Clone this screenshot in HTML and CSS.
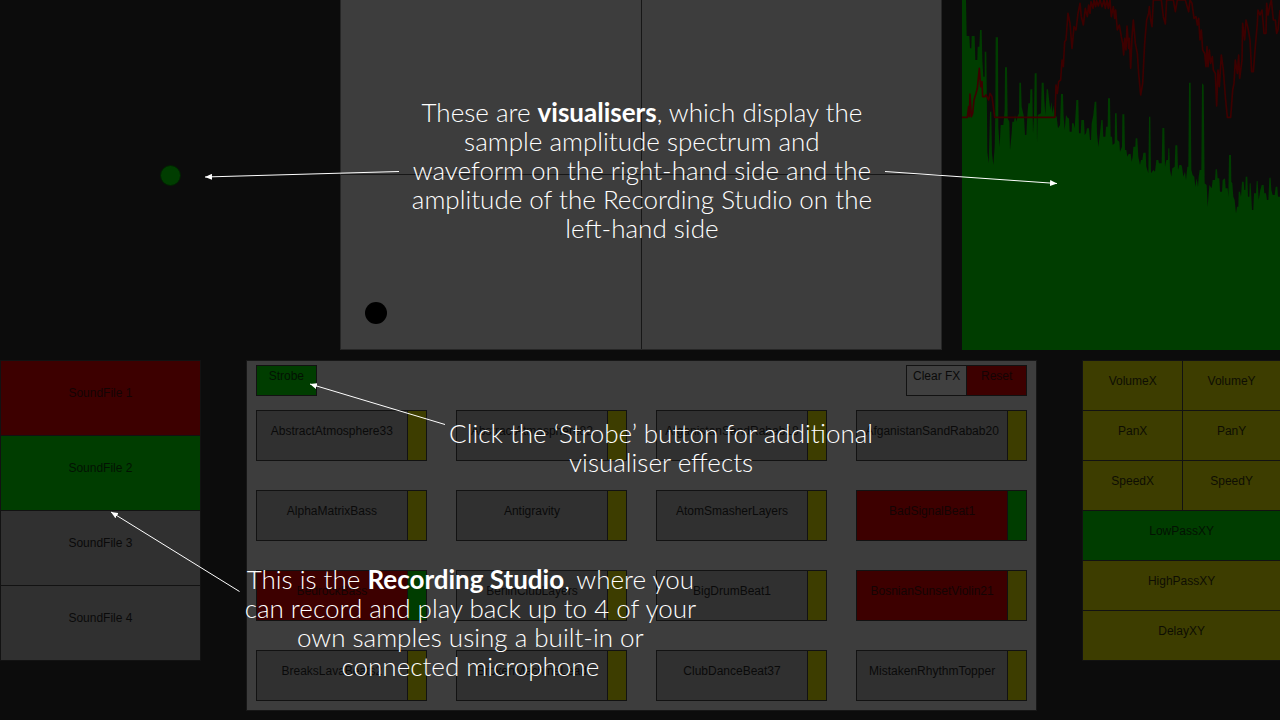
FILE: index.html
```html
<!DOCTYPE html>
<html lang="en">
<head>
<meta charset="utf-8">
<title>Sampler guide</title>
<link rel="stylesheet" href="styles.css">
</head>
<body>
<main class="stage">
  <section class="visuals">
    <div class="amplitude"><span class="level"></span></div>
    <div class="pad"><span class="puck"></span></div>
    <svg class="spectrum" viewBox="66 0 954 1050" preserveAspectRatio="none" role="img" aria-label="Spectrum and waveform">
      <path class="bars" d="M66 0L78 0 80 108 88 108 90 145 94 145 95 108 104 108 106 180 112 180 113 140 118 140 120 90 125 90 127 180 130 230 134 230 134 155 139 155 141 340 142 455 146 490 150 335 154 335 156 460 160 495 164 440 166 335 167 112 174 112 175 380 179 440 182 375 190 375 194 330 195 202 201 202 203 355 208 365 210 450 215 400 217 365 222 365 225 345 230 365 232 350 237 340 238 248 243 248 245 320 252 350 255 405 259 405 262 345 265 310 270 310 271 268 277 268 279 400 282 345 284 220 290 220 291 430 293 345 303 340 305 248 311 248 313 300 316 345 320 268 324 268 328 305 331 330 334 305 338 340 341 315 344 345 350 350 354 385 360 375 363 282 369 282 371 350 374 390 378 345 384 355 387 355 389 395 395 395 396 370 401 370 404 385 408 320 409 300 415 300 417 400 422 400 424 360 432 360 434 405 438 400 441 385 447 385 450 420 453 420 455 370 460 345 464 305 469 305 471 400 475 440 480 400 484 360 488 360 490 410 496 410 498 380 503 380 504 295 510 295 512 410 516 410 518 435 524 430 525 340 530 340 532 420 538 425 540 455 546 440 547 343 553 343 555 450 559 450 562 470 566 462 572 462 575 485 578 470 580 440 586 440 587 415 592 415 595 470 600 495 603 480 607 480 610 458 617 458 619 500 625 520 627 350 631 350 633 520 640 510 645 515 649 480 655 480 657 490 665 490 667 384 673 384 675 500 679 480 684 480 685 445 688 445 690 510 694 530 697 505 704 500 706 436 712 436 714 510 718 495 724 495 726 500 730 530 735 515 738 540 742 500 745 500 747 248 752 248 754 510 758 525 763 530 766 560 770 535 774 560 776 530 779 510 784 510 786 250 791 255 794 550 800 555 803 620 808 555 815 565 818 540 825 540 827 508 831 508 833 535 838 535 840 575 846 575 848 540 855 535 857 565 863 565 865 590 867 465 873 465 874 545 877 550 880 590 884 600 888 640 891 620 895 620 896 575 900 575 903 590 906 545 911 545 913 570 916 570 917 530 922 530 924 590 928 590 929 550 932 550 936 630 940 630 942 580 948 580 950 543 953 543 956 600 961 570 965 555 971 555 973 580 978 580 981 600 985 600 988 533 992 533 994 570 998 585 1004 585 1007 560 1012 560 1014 590 1020 590V1050H66Z"/>
      <path class="wave" d="M66 352L82 352 86 320 88 350 90 282 94 350 98 340 102 300 108 280 112 265 118 205 122 260 126 245 128 290 134 290 138 285 146 300 150 280 156 290 160 320 164 352 345 352 348 255 352 280 356 245 362 240 366 180 370 200 374 125 378 120 384 40 390 70 396 145 402 80 408 90 414 40 420 10 424 50 430 75 436 25 442 50 446 15 450 40 453 5 459 25 462 0 467 20 470 2 475 18 480 0 486 20 492 0 496 25 501 0 505 25 510 0 514 50 520 20 524 55 527 30 532 90 538 75 544 110 548 130 551 165 554 115 558 150 561 78 566 145 568 115 572 205 576 110 580 60 586 130 592 160 596 220 602 285 608 250 614 130 620 60 626 40 628 20 632 60 636 80 640 0 664 0 670 50 676 72 680 0 700 0 706 35 712 0 736 0 746 35 750 0 756 10 762 55 768 50 772 75 776 55 780 120 784 90 788 150 794 160 798 200 801 140 804 200 808 150 812 190 817 170 820 210 826 220 830 318 834 210 838 260 844 165 850 210 856 290 862 352 872 352 878 270 882 250 886 180 892 220 896 165 899 235 906 180 908 70 914 120 918 60 924 85 930 120 935 215 940 215 946 140 952 70 954 30 960 45 966 30 972 100 978 100 980 10 984 45 990 15 994 0 1000 60 1006 60 1010 100 1014 90 1020 30"/>
    </svg>
  </section>

  <section class="controls">
    <div class="recorder">
      <button class="key red">SoundFile 1</button>
      <button class="key green">SoundFile 2</button>
      <button class="key">SoundFile 3</button>
      <button class="key">SoundFile 4</button>
    </div>

    <div class="sampler">
      <div class="toolbar">
        <button class="key green tool">Strobe</button>
        <div class="resets">
          <button class="key light tool">Clear FX</button>
          <button class="key red tool">Reset</button>
        </div>
      </div>
      <div class="samples">
        <div class="sample"><button class="key">AbstractAtmosphere33</button><button class="key yellow" aria-label="Effects"></button></div>
        <div class="sample"><button class="key">AbstractAtmosphere82</button><button class="key yellow" aria-label="Effects"></button></div>
        <div class="sample"><button class="key">AfganistanSandRabab18</button><button class="key yellow" aria-label="Effects"></button></div>
        <div class="sample"><button class="key">AfganistanSandRabab20</button><button class="key yellow" aria-label="Effects"></button></div>
        <div class="sample"><button class="key">AlphaMatrixBass</button><button class="key yellow" aria-label="Effects"></button></div>
        <div class="sample"><button class="key">Antigravity</button><button class="key yellow" aria-label="Effects"></button></div>
        <div class="sample"><button class="key">AtomSmasherLayers</button><button class="key yellow" aria-label="Effects"></button></div>
        <div class="sample"><button class="key red">BadSignalBeat1</button><button class="key green" aria-label="Effects"></button></div>
        <div class="sample"><button class="key red">BedrockBass</button><button class="key green" aria-label="Effects"></button></div>
        <div class="sample"><button class="key">BerlinClubLayers</button><button class="key yellow" aria-label="Effects"></button></div>
        <div class="sample"><button class="key">BigDrumBeat1</button><button class="key yellow" aria-label="Effects"></button></div>
        <div class="sample"><button class="key red">BosnianSunsetViolin21</button><button class="key yellow" aria-label="Effects"></button></div>
        <div class="sample"><button class="key">BreaksLavaBeats2</button><button class="key yellow" aria-label="Effects"></button></div>
        <div class="sample"><button class="key">BrokenMachineLead</button><button class="key yellow" aria-label="Effects"></button></div>
        <div class="sample"><button class="key">ClubDanceBeat37</button><button class="key yellow" aria-label="Effects"></button></div>
        <div class="sample"><button class="key">MistakenRhythmTopper</button><button class="key yellow" aria-label="Effects"></button></div>
      </div>
    </div>

    <div class="effects">
      <button class="key yellow">VolumeX</button>
      <button class="key yellow">VolumeY</button>
      <button class="key yellow">PanX</button>
      <button class="key yellow">PanY</button>
      <button class="key yellow">SpeedX</button>
      <button class="key yellow">SpeedY</button>
      <button class="key green wide">LowPassXY</button>
      <button class="key yellow wide">HighPassXY</button>
      <button class="key yellow wide">DelayXY</button>
    </div>
  </section>

  <svg class="arrows" viewBox="0 0 1280 720" preserveAspectRatio="none" aria-hidden="true">
    <defs>
      <marker id="head" viewBox="0 0 7 6" refX="7" refY="3" markerWidth="7" markerHeight="6" orient="auto" markerUnits="userSpaceOnUse"><path d="M0 0L7 3 0 6Z"/></marker>
    </defs>
    <path d="M399 171.500L205 177"/>
    <path d="M885 171.500L1057 183.500"/>
    <path d="M445 424.500L310 384"/>
    <path d="M239.500 591.500L111 512"/>
  </svg>

  <p class="note note-visuals">These are <strong>visualisers</strong>, which display the<br>sample amplitude spectrum and<br>waveform on the right-hand side and the<br>amplitude of the Recording Studio on the<br>left-hand side</p>
  <p class="note note-strobe">Click the ‘Strobe’ button for additional<br>visualiser effects</p>
  <p class="note note-recorder">This is the <strong>Recording Studio</strong>, where you<br>can record and play back up to 4 of your<br>own samples using a built-in or<br>connected microphone</p>
</main>
</body>
</html>
```

FILE: styles.css
```css
* { box-sizing: border-box; }

body {
  margin: 0;
  background: #0c0c0c;
  font-family: "Liberation Sans", Arial, sans-serif;
}

.stage {
  position: relative;
  display: flex;
  flex-direction: column;
  gap: 10px;
  min-height: 100vh;
  padding-bottom: 9px;
  overflow: hidden;
}

.visuals {
  display: grid;
  grid-template-columns: 340fr 602fr 20fr 318fr;
  height: 350px;
}

.amplitude {
  display: grid;
  place-items: center;
}

.level {
  width: 21px;
  height: 21px;
  border: 1px solid #022002;
  border-radius: 50%;
  background: #003d00;
}

.pad {
  position: relative;
  border: 1px solid #262626;
  border-top: 0;
  background:
    linear-gradient(#171717, #171717) center / 1px 100% no-repeat,
    linear-gradient(#171717, #171717) center / 100% 1px no-repeat,
    #3d3d3d;
}

.puck {
  position: absolute;
  left: 4%;
  bottom: 25px;
  width: 22px;
  height: 22px;
  border-radius: 50%;
  background: #000;
}

.spectrum {
  grid-column: 4;
  display: block;
  width: 100%;
  height: 350px;
}

.bars { fill: #003d00; }

.wave {
  fill: none;
  stroke: #3d0000;
  stroke-width: 5;
  stroke-linejoin: round;
}

.controls {
  display: grid;
  grid-template-columns: 201fr 792fr 198fr;
  column-gap: 45px;
  align-items: start;
}

.key {
  display: block;
  min-width: 0;
  margin: 0;
  padding: 0 0 10px;
  border: 1px solid #121212;
  border-radius: 0;
  background: #303030;
  color: #0a0a0a;
  font: 12px/14px "Liberation Sans", Arial, sans-serif;
  text-align: center;
  white-space: nowrap;
}

.red { background: #3d0000; color: #140404; }
.green { background: #003d00; color: #031203; }
.yellow { background: #3d3d00; color: #0e0e03; }
.light { background: #404040; }

.recorder {
  display: grid;
  grid-auto-rows: 75px;
}

.recorder .key { margin-bottom: -1px; }

.sampler {
  padding: 4px 9px 9px;
  border: 1px solid #171717;
  background: #3d3d3d;
}

.toolbar {
  display: flex;
  justify-content: space-between;
  margin-bottom: 14px;
}

.resets { display: flex; }

.tool {
  width: 61px;
  height: 31px;
}

.resets .tool + .tool { margin-left: -1px; }

.samples {
  display: grid;
  grid-template-columns: repeat(4, 1fr);
  gap: 29px;
}

.sample {
  display: grid;
  grid-template-columns: 1fr 20px;
  height: 51px;
}

.sample .key:first-child { margin-right: -1px; }

.effects {
  display: grid;
  grid-template-columns: 100px 1fr;
  grid-auto-rows: 50px;
}

.effects .key { margin: 0 -1px -1px 0; }
.wide { grid-column: span 2; }

.arrows {
  position: absolute;
  inset: 0;
  width: 100%;
  height: 100%;
  pointer-events: none;
}

.arrows > path {
  fill: none;
  stroke: #fff;
  stroke-width: 1;
  marker-end: url(#head);
}

.arrows marker path { fill: #fff; }

.note {
  position: absolute;
  margin: 0;
  color: #fff;
  font: 300 26px/29px Lato, "Open Sans", sans-serif;
  text-align: center;
  white-space: nowrap;
  transform: translateX(-50%);
}

.note strong { font-weight: 700; }

.note-visuals { left: 50.15%; top: 98px; }
.note-strobe { left: 51.65%; top: 419px; }
.note-recorder { left: 36.75%; top: 565px; }
```
